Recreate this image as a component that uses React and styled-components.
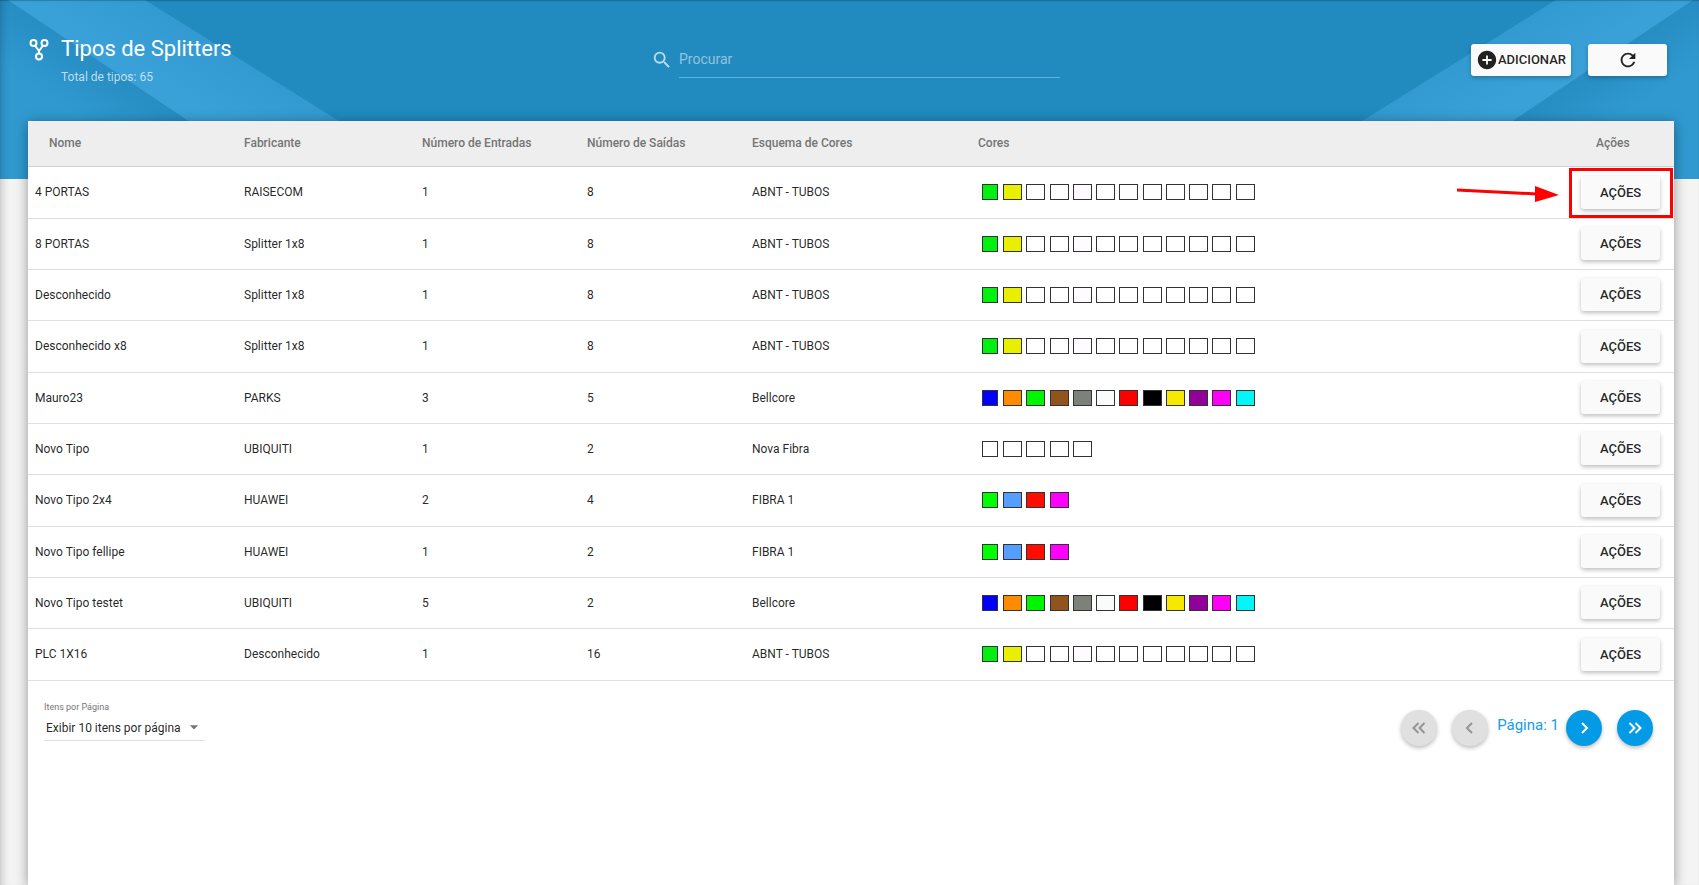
import React from 'react'
import styled, { createGlobalStyle } from 'styled-components'
import { MdSearch, MdRefresh, MdAddCircle, MdArrowDropDown } from 'react-icons/md'

const GlobalStyle = createGlobalStyle`
	* {
		box-sizing: border-box;
	}
	body {
		margin: 0;
		background: #f4f4f4;
		font-family: Roboto, "Liberation Sans", sans-serif;
		color: rgba(0, 0, 0, 0.87);
	}
	button, input, select {
		font-family: inherit;
	}
`;

const Page = styled.div`
	position: relative;
	display: flex;
	flex-direction: column;
	min-height: 100vh;
	padding: 0 25px 0 28px;
	overflow: hidden;
	box-shadow: inset 8px 0 8px -6px rgba(0, 0, 0, 0.2), inset 0 1px 1px rgba(0, 0, 0, 0.2);
`;

const Banner = styled.div`
	position: absolute;
	z-index: -1;
	top: 0;
	left: 0;
	right: 0;
	height: 179px;
	display: flex;
	justify-content: space-between;
	background: #218abf;
`;

const Header = styled.header`
	display: grid;
	grid-template-columns: 1fr 418px 1fr;
	align-items: center;
	height: 121px;
	padding-bottom: 2px;
`;

const Heading = styled.div`
	display: flex;
	gap: 10px;
	color: #fff;
	svg {
		flex: none;
		margin-top: 5px;
	}
	h1 {
		margin: 0;
		line-height: 32px;
		font-size: 22px;
		font-weight: 400;
	}
	p {
		margin: 2px 0 0;
		line-height: 20px;
		font-size: 12px;
		color: rgba(255, 255, 255, 0.7);
	}
`;

const Search = styled.label`
	display: flex;
	align-items: center;
	gap: 6px;
	padding-left: 9px;
	color: rgba(255, 255, 255, 0.7);
	svg {
		flex: none;
	}
	input {
		flex: 1;
		min-width: 0;
		height: 36px;
		padding: 0;
		border: 0;
		border-bottom: 1px solid #5bb3e0;
		outline: 0;
		background: transparent;
		font-size: 14px;
		color: #fff;
	}
	input::placeholder {
		color: rgba(255, 255, 255, 0.5);
	}
`;

const Toolbar = styled.div`
	display: flex;
	justify-content: flex-end;
	gap: 17px;
	padding-right: 7px;
`;

const Button = styled.button`
	display: inline-flex;
	align-items: center;
	justify-content: center;
	min-width: 79px;
	height: ${props => props.$height || 32}px;
	padding: 0 5px;
	border: 0;
	border-radius: 3px;
	background: #fafafa;
	box-shadow: 0 2px 4px rgba(0, 0, 0, 0.26);
	font-size: 13px;
	font-weight: 500;
	color: rgba(0, 0, 0, 0.87);
`;

const Card = styled.main`
	flex: 1;
	background: #fff;
	box-shadow: 0 2px 12px rgba(0, 0, 0, 0.4);
`;

const Table = styled.table`
	width: 100%;
	table-layout: fixed;
	border-collapse: collapse;
	font-size: 12px;
	th, td {
		padding: 0 7px;
		text-align: left;
	}
	th {
		height: 45px;
		border-bottom: 1px solid #d0d0d0;
		background: #eee;
		font-weight: 500;
		color: #757575;
	}
	th:first-child {
		padding-left: 21px;
	}
	td {
		height: 51px;
		border-bottom: 1px solid #e0e0e0;
	}
	tr:nth-child(3n + 1) td {
		height: 52px;
	}
`;

const Column = styled.col`
	width: ${props => props.$width}px;
`;

const ActionHead = styled.th`
	&& {
		padding-left: 22px;
	}
`;

const ActionCell = styled.td`
	position: relative;
	padding: 0;
`;

const Swatches = styled.div`
	display: grid;
	grid-template-columns: 17px repeat(11, 1fr);
	gap: 4px;
	width: 273px;
	margin-left: 4px;
`;

const Swatch = styled.span`
	width: 19px;
	height: 16px;
	border: 1px solid #333;
	background: ${props => props.$color};
	&:first-child {
		width: 16px;
	}
`;

const Highlight = styled.span`
	position: absolute;
	top: 1px;
	right: 1px;
	width: 104px;
	height: 50px;
	border: 3px solid #f00;
	pointer-events: none;
`;

const Arrow = styled.svg`
	position: absolute;
	top: 16px;
	right: 115px;
	pointer-events: none;
`;

const Footer = styled.footer`
	display: flex;
	justify-content: space-between;
	padding: 19px 21px 0 16px;
`;

const PageSize = styled.div`
	width: 161px;
	label {
		display: block;
		line-height: 14px;
		font-size: 9px;
		color: #757575;
	}
	div {
		display: flex;
		align-items: center;
		height: 27px;
		border-bottom: 1px solid #e0e0e0;
	}
	select {
		flex: 1;
		padding: 3px 2px 0;
		border: 0;
		outline: 0;
		appearance: none;
		background: transparent;
		font-size: 12px;
		color: rgba(0, 0, 0, 0.87);
	}
	svg {
		margin-right: 1px;
		color: #757575;
	}
`;

const Pager = styled.nav`
	display: flex;
	align-items: center;
	height: 56px;
	span {
		padding: 0 7px 6px 9px;
		font-size: 15px;
		color: #129cec;
	}
`;

const RoundButton = styled.button`
	display: flex;
	align-items: center;
	justify-content: center;
	width: 36px;
	height: 36px;
	padding: 0;
	border: 0;
	border-radius: 50%;
	background: #039be5;
	box-shadow: 0 2px 4px rgba(0, 0, 0, 0.26);
	color: #fff;
	& + & {
		margin-left: 15px;
	}
	&:disabled {
		background: #e0e0e0;
		color: #949494;
	}
`;

const ABNT = ['#00f010', '#e8f000', '#fff', '#fff', '#fffcff', '#fff', '#fff', '#fff', '#fff', '#fff', '#fff', '#fff'];
const BELLCORE = ['#00f', '#ff8c00', '#00f500', '#91541c', '#7c8279', '#f9fcfb', '#f00', '#000', '#f7e800', '#910099', '#ff00f7', '#00f7f7'];
const NOVA = ['#fff', '#fff', '#fff', '#fff', '#fff'];
const FIBRA = ['#0f0', '#559eff', '#ff0d00', '#f0f'];

const splitters = [
  { name: '4 PORTAS', maker: 'RAISECOM', inputs: 1, outputs: 8, scheme: 'ABNT - TUBOS', colors: ABNT },
  { name: '8 PORTAS', maker: 'Splitter 1x8', inputs: 1, outputs: 8, scheme: 'ABNT - TUBOS', colors: ABNT },
  { name: 'Desconhecido', maker: 'Splitter 1x8', inputs: 1, outputs: 8, scheme: 'ABNT - TUBOS', colors: ABNT },
  { name: 'Desconhecido x8', maker: 'Splitter 1x8', inputs: 1, outputs: 8, scheme: 'ABNT - TUBOS', colors: ABNT },
  { name: 'Mauro23', maker: 'PARKS', inputs: 3, outputs: 5, scheme: 'Bellcore', colors: BELLCORE },
  { name: 'Novo Tipo', maker: 'UBIQUITI', inputs: 1, outputs: 2, scheme: 'Nova Fibra', colors: NOVA },
  { name: 'Novo Tipo 2x4', maker: 'HUAWEI', inputs: 2, outputs: 4, scheme: 'FIBRA 1', colors: FIBRA },
  { name: 'Novo Tipo fellipe', maker: 'HUAWEI', inputs: 1, outputs: 2, scheme: 'FIBRA 1', colors: FIBRA },
  { name: 'Novo Tipo testet', maker: 'UBIQUITI', inputs: 5, outputs: 2, scheme: 'Bellcore', colors: BELLCORE },
  { name: 'PLC 1X16', maker: 'Desconhecido', inputs: 1, outputs: 16, scheme: 'ABNT - TUBOS', colors: ABNT },
]

const Ribbon = ({ id, flip }) => (
  <svg width="440" height="179" viewBox="0 0 440 179" aria-hidden="true">
    <defs>
      <linearGradient id={id + 'band'} gradientUnits="userSpaceOnUse" x1="243" y1="60" x2="210" y2="113">
        <stop offset="0" stopColor="#329ad0" />
        <stop offset="1" stopColor="#39a1d7" />
      </linearGradient>
      <linearGradient id={id + 'corner'} gradientUnits="userSpaceOnUse" x1="98" y1="61" x2="65" y2="110">
        <stop offset="0" stopColor="#278dc3" />
        <stop offset="1" stopColor="#309ad0" />
      </linearGradient>
    </defs>
    <g transform={flip ? 'matrix(-1 0 0 1 442 0)' : undefined}>
      <path d="M0 0H145L432 179H0Z" fill={`url(#${id}band)`} />
      <path d="M0 0H8L275 179H0Z" fill={`url(#${id}corner)`} />
    </g>
  </svg>
)

const SplitIcon = () => (
  <svg width="23" height="24" viewBox="0 0 23 24" fill="none" stroke="currentColor" strokeWidth="2" aria-hidden="true">
    <circle cx="5.500" cy="5" r="3" />
    <circle cx="16.500" cy="5" r="3" />
    <circle cx="11" cy="18.500" r="3" />
    <path d="M7 7.500l4 5.500v2.500M15 7.500L11 13" />
  </svg>
)

const Chevron = ({ double, left }) => (
  <svg width="24" height="24" viewBox="0 0 24 24" fill="none" stroke="currentColor" strokeWidth="2" aria-hidden="true">
    <g transform={left ? 'matrix(-1 0 0 1 24 0)' : undefined}>
      {double ? <path d="M6.500 7l5 5-5 5M12.500 7l5 5-5 5" /> : <path d="M10 7l5 5-5 5" />}
    </g>
  </svg>
)

const App = () => {
  return (
    <Page>
      <GlobalStyle />
      <Banner>
        <Ribbon id="left" />
        <Ribbon id="right" flip />
      </Banner>
      <Header>
        <Heading>
          <SplitIcon />
          <div>
            <h1>Tipos de Splitters</h1>
            <p>Total de tipos: 65</p>
          </div>
        </Heading>
        <Search>
          <MdSearch size={22} />
          <input type="text" placeholder="Procurar" aria-label="Procurar" />
        </Search>
        <Toolbar>
          <Button type="button"><MdAddCircle size={22} />ADICIONAR</Button>
          <Button type="button" aria-label="Atualizar"><MdRefresh size={22} /></Button>
        </Toolbar>
      </Header>
      <Card>
        <Table>
          <colgroup>
            <Column $width={209} />
            <Column $width={178} />
            <Column $width={165} />
            <Column $width={165} />
            <Column $width={226} />
            <col />
            <Column $width={100} />
          </colgroup>
          <thead>
            <tr>
              <th>Nome</th>
              <th>Fabricante</th>
              <th>Número de Entradas</th>
              <th>Número de Saídas</th>
              <th>Esquema de Cores</th>
              <th>Cores</th>
              <ActionHead>Ações</ActionHead>
            </tr>
          </thead>
          <tbody>
            {
              splitters.map((item, index) => (
                <tr key={item.name}>
                  <td>{item.name}</td>
                  <td>{item.maker}</td>
                  <td>{item.inputs}</td>
                  <td>{item.outputs}</td>
                  <td>{item.scheme}</td>
                  <td>
                    <Swatches>
                      {item.colors.map((color, i) => <Swatch key={i} $color={color} />)}
                    </Swatches>
                  </td>
                  <ActionCell>
                    <Button type="button" $height={33}>AÇÕES</Button>
                    {
                      index === 0 && (
                        <>
                          <Highlight />
                          <Arrow width="102" height="20" viewBox="0 0 102 20" aria-hidden="true">
                            <path d="M0 7L80 11" stroke="#f00" strokeWidth="3" />
                            <path d="M78 3L102 12L78 19Z" fill="#f00" />
                          </Arrow>
                        </>
                      )
                    }
                  </ActionCell>
                </tr>
              ))
            }
          </tbody>
        </Table>
        <Footer>
          <PageSize>
            <label htmlFor="page-size">Itens por Página</label>
            <div>
              <select id="page-size" defaultValue="10">
                <option value="10">Exibir 10 itens por página</option>
                <option value="25">Exibir 25 itens por página</option>
                <option value="50">Exibir 50 itens por página</option>
              </select>
              <MdArrowDropDown size={20} />
            </div>
          </PageSize>
          <Pager aria-label="Paginação">
            <RoundButton type="button" aria-label="Primeira página" disabled><Chevron double left /></RoundButton>
            <RoundButton type="button" aria-label="Página anterior" disabled><Chevron left /></RoundButton>
            <span>Página: 1</span>
            <RoundButton type="button" aria-label="Próxima página"><Chevron /></RoundButton>
            <RoundButton type="button" aria-label="Última página"><Chevron double /></RoundButton>
          </Pager>
        </Footer>
      </Card>
    </Page>
  )
}

export default App
